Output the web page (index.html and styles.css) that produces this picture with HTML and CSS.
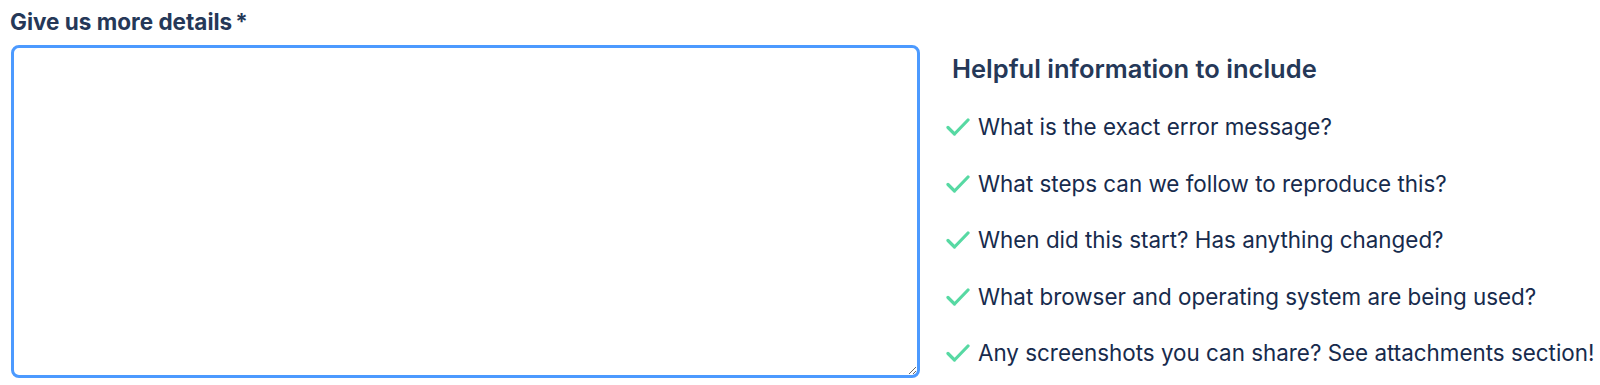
FILE: index.html
```html
<!DOCTYPE html>
<html lang="en">
<head>
  <meta charset="UTF-8">
  <title>Give us more details</title>
  <link rel="stylesheet" href="styles.css">
</head>
<body>
  <div class="form-row">
    <div class="field">
      <label class="field-label" for="details">Give us more details<span class="required">*</span></label>
      <textarea class="details-input" id="details"></textarea>
    </div>

    <div class="helpful">
      <h3 class="helpful-title">Helpful information to include</h3>
      <ul class="tips">
        <li><svg class="check" viewBox="0 0 24 20"><polyline points="2,10.5 8.5,17 22,3"/></svg>What is the exact error message?</li>
        <li><svg class="check" viewBox="0 0 24 20"><polyline points="2,10.5 8.5,17 22,3"/></svg>What steps can we follow to reproduce this?</li>
        <li><svg class="check" viewBox="0 0 24 20"><polyline points="2,10.5 8.5,17 22,3"/></svg>When did this start? Has anything changed?</li>
        <li><svg class="check" viewBox="0 0 24 20"><polyline points="2,10.5 8.5,17 22,3"/></svg>What browser and operating system are being used?</li>
        <li><svg class="check" viewBox="0 0 24 20"><polyline points="2,10.5 8.5,17 22,3"/></svg>Any screenshots you can share? See attachments section!</li>
      </ul>
    </div>
  </div>
</body>
</html>
```

FILE: styles.css
```css
body {
  margin: 0;
  padding: 8px 0 0 10px;
  background: #fff;
  font-family: Inter, 'Noto Sans', sans-serif;
  color: #172b4d;
  overflow: hidden;
}

.form-row {
  display: flex;
  gap: 26px;
}

.field {
  display: flex;
  flex-direction: column;
  width: 910px;
  flex-shrink: 0;
}

.field-label {
  font-size: 22.5px;
  font-weight: 700;
  color: #253858;
  line-height: 28px;
  margin-bottom: 9px;
}

.required {
  margin-left: 3px;
}

.details-input {
  box-sizing: border-box;
  height: 333px;
  margin: 0 0 0 1px;
  border: 3px solid #4c9aff;
  border-radius: 8px;
  outline: none;
  resize: vertical;
  font-family: inherit;
  font-size: 18px;
}

.helpful {
  padding-top: 45px;
  flex-shrink: 0;
}

.helpful-title {
  margin: 0 0 0 6px;
  font-size: 25.5px;
  font-weight: 600;
  color: #253858;
  line-height: 32px;
}

.tips {
  list-style: none;
  margin: 26px 0 0 0;
  padding: 0;
}

.tips li {
  display: flex;
  align-items: center;
  font-size: 22.4px;
  line-height: 32px;
  margin-bottom: 24.5px;
  white-space: nowrap;
}

.check {
  width: 24px;
  height: 20px;
  margin-right: 8px;
  flex-shrink: 0;
}

.check polyline {
  fill: none;
  stroke: #57d9a3;
  stroke-width: 3.2;
  stroke-linecap: round;
  stroke-linejoin: round;
}
```
